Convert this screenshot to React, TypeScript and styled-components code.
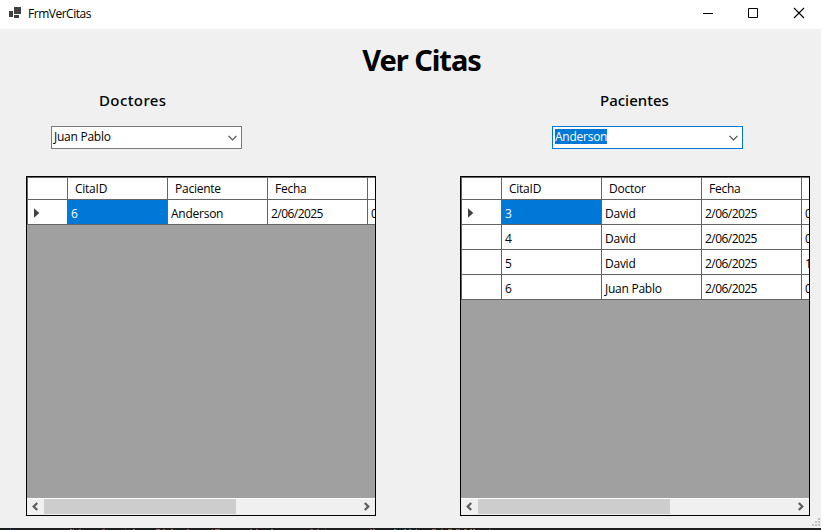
import React from "react";
import styled, { createGlobalStyle, css } from "styled-components";

const GlobalStyle = createGlobalStyle`
  * { box-sizing: border-box; }
  html, body { margin: 0; padding: 0; overflow: hidden; }
  body { font-family: "Open Sans", "Noto Sans", sans-serif; font-size: 12px; color: #000; }
`;

const Window = styled.div`
  width: 821px;
  height: 530px;
  display: flex;
  flex-direction: column;
  background: #f0f0f0;
  overflow: hidden;
`;

const TitleBar = styled.header`
  height: 29px;
  flex: none;
  display: flex;
  align-items: center;
  background: #fff;
`;

const AppIcon = styled.svg`
  width: 14px;
  height: 12px;
  margin: 0 6px 3px 8px;
`;

const Caption = styled.span`
  flex: 1;
  line-height: 16px;
  margin-bottom: 1px;
  letter-spacing: -0.48px;
`;

const CaptionButtons = styled.svg`
  width: 121px;
  height: 29px;
  flex: none;
`;

const Form = styled.main`
  flex: 1;
  display: flex;
  flex-direction: column;
`;

const Heading = styled.h1`
  margin: 9px 0 0 22px;
  height: 43px;
  line-height: 43px;
  font-family: "Noto Sans", "Open Sans", sans-serif;
  font-size: 29px;
  font-weight: 700;
  letter-spacing: -1.05px;
  text-align: center;
`;

const Panels = styled.div`
  display: flex;
  gap: 84px;
  padding: 9px 0 0 26px;
`;

const Panel = styled.section`
  width: 350px;
  display: flex;
  flex-direction: column;
`;

const PanelTitle = styled.h2<{ $indent: number; $tracking: number }>`
  margin: 0 0 0 ${(p) => p.$indent}px;
  height: 21px;
  line-height: 20px;
  font-family: "Noto Sans", "Open Sans", sans-serif;
  font-size: 15px;
  font-weight: 500;
  letter-spacing: ${(p) => p.$tracking}px;
  white-space: nowrap;
`;

const Combo = styled.div<{ $indent: number; $focused?: boolean }>`
  width: 191px;
  height: 23px;
  margin: 15px 0 27px ${(p) => p.$indent}px;
  padding: 0 4px 0 2px;
  display: flex;
  align-items: center;
  justify-content: space-between;
  background: #fff;
  border: 1px solid ${(p) => (p.$focused ? "#0078d7" : "#7a7a7a")};
`;

const ComboText = styled.span<{ $selected?: boolean }>`
  height: 15px;
  line-height: 15px;
  margin-bottom: 2px;
  letter-spacing: -0.25px;
  ${(p) => p.$selected && css`background: #0078d7; color: #fff;`}
`;

const Chevron = styled.svg`
  width: 9px;
  height: 6px;
  margin-top: 1px;
`;

const GridFrame = styled.div`
  width: 350px;
  height: 340px;
  border: 1px solid #000;
  background: #a0a0a0;
  display: flex;
  flex-direction: column;
  overflow: hidden;
`;

const Rows = styled.div`
  flex: 1;
  min-height: 0;
  overflow: hidden;
`;

const Row = styled.div<{ $header?: boolean }>`
  width: 441px;
  display: grid;
  grid-template-columns: 41px repeat(4, 100px);
  height: ${(p) => (p.$header ? 23 : 25)}px;
  ${(p) => p.$header && css`border-top: 1px solid #646464;`}
`;

const Cell = styled.div<{ $header?: boolean; $selected?: boolean; $numeric?: boolean }>`
  padding-left: ${(p) => (p.$header ? 7 : 3)}px;
  line-height: ${(p) => (p.$header ? 22 : 27)}px;
  border-right: 1px solid #646464;
  border-bottom: 1px solid #646464;
  background: ${(p) => (p.$selected ? "#0078d7" : "#fff")};
  color: ${(p) => (p.$selected ? "#fff" : "#000")};
  letter-spacing: ${(p) => (p.$numeric ? -0.55 : -0.25)}px;
  white-space: nowrap;
  overflow: hidden;
`;

const RowHeader = styled.div`
  display: flex;
  align-items: center;
  padding: 2px 0 0 6px;
  background: #fff;
  border-left: 1px solid #646464;
  border-right: 1px solid #646464;
  border-bottom: 1px solid #646464;
`;

const ScrollBar = styled.div`
  height: 17px;
  flex: none;
  display: flex;
  justify-content: space-between;
  background: #f0f0f0;
  border-top: 1px solid #fff;
`;

const ScrollArrow = styled.svg`
  width: 17px;
  height: 15px;
`;

const Thumb = styled.div`
  width: 192px;
  height: 15px;
  margin-right: auto;
  background: #cdcdcd;
`;

const Footer = styled.footer`
  margin-top: auto;
  display: flex;
  flex-direction: column;
  align-items: flex-end;
`;

const Grip = styled.svg`
  width: 9px;
  height: 9px;
  margin-bottom: 1px;
`;

const BottomEdge = styled.svg`
  width: 821px;
  height: 2px;
  background: #1c1e1e;
`;

type GridProps = { columns: string[]; rows: string[][] };

function DataGrid({ columns, rows }: GridProps) {
  return (
    <GridFrame>
      <Rows>
        <Row $header>
          <RowHeader />
          {columns.map((c) => <Cell $header key={c}>{c}</Cell>)}
        </Row>
        {rows.map((r, i) => (
          <Row key={r[0]}>
            <RowHeader>
              {i === 0 && (
                <svg width="6" height="10" viewBox="0 0 6 10">
                  <path d="M0 0.3 5.3 5 0 9.7Z" fill="#404040" />
                </svg>
              )}
            </RowHeader>
            {r.map((v, j) => (
              <Cell key={j} $numeric={j >= 2} $selected={i === 0 && j === 0}>{v}</Cell>
            ))}
          </Row>
        ))}
      </Rows>
      <ScrollBar>
        <ScrollArrow viewBox="0 0 17 15"><path d="M10.2 4 6.7 7.5l3.5 3.5" fill="none" stroke="#606060" strokeWidth="2.3" /></ScrollArrow>
        <Thumb />
        <ScrollArrow viewBox="0 0 17 15"><path d="M6.8 4 10.3 7.5 6.8 11" fill="none" stroke="#606060" strokeWidth="2.3" /></ScrollArrow>
      </ScrollBar>
    </GridFrame>
  );
}

type PanelProps = GridProps & {
  title: string;
  titleIndent: number;
  titleTracking?: number;
  comboIndent: number;
  value: string;
  focused?: boolean;
};

function CitasPanel({ title, titleIndent, titleTracking = 0, comboIndent, value, focused, columns, rows }: PanelProps) {
  return (
    <Panel>
      <PanelTitle $indent={titleIndent} $tracking={titleTracking}>{title}</PanelTitle>
      <Combo $indent={comboIndent} $focused={focused}>
        <ComboText $selected={focused}>{value}</ComboText>
        <Chevron viewBox="0 0 9 6"><path d="M.5 .8 4.5 4.8l4-4" fill="none" stroke="#505050" strokeWidth="1.2" /></Chevron>
      </Combo>
      <DataGrid columns={columns} rows={rows} />
    </Panel>
  );
}

const flecks = [
  [10, 1, "#3b6ea5"], [70, 2, "#a07565"], [73, 1, "#a07565"], [79, 2, "#98705f"], [102, 3, "#86685b"], [125, 1, "#86685b"],
  [133, 2, "#a07565"], [156, 4, "#a07565"], [163, 2, "#98705f"], [171, 2, "#a07565"], [187, 2, "#98705f"], [212, 1, "#a07565"],
  [215, 5, "#98705f"], [250, 2, "#86685b"], [256, 2, "#86685b"], [271, 2, "#a07565"], [310, 3, "#86685b"], [317, 2, "#98705f"],
  [325, 1, "#86685b"], [370, 2, "#98705f"], [373, 2, "#98705f"], [394, 2, "#4c8ac0"], [404, 2, "#4c8ac0"], [409, 2, "#5b8190"],
  [416, 1, "#4c8ac0"], [432, 4, "#98705f"], [441, 2, "#86685b"], [448, 4, "#98705f"], [456, 4, "#86685b"], [464, 3, "#86685b"],
  [470, 2, "#a07565"], [473, 2, "#a07565"], [489, 2, "#505050"],
] as const;

export default function App() {
  return (
    <>
      <GlobalStyle />
      <Window>
        <TitleBar>
          <AppIcon viewBox="0 0 14 12">
            <path d="M1 4h4v6H1zM6 0h7v7H6zM6 8h5v3H6z" fill="#424242" />
          </AppIcon>
          <Caption>FrmVerCitas</Caption>
          <CaptionButtons viewBox="0 0 121 29" fill="none" stroke="#000">
            <path d="M3 13.5h10M48.5 8.5h9v9h-9z" />
            <path d="M94 8l10 10M104 8 94 18" strokeWidth="1.1" />
          </CaptionButtons>
        </TitleBar>
        <Form>
          <Heading>Ver Citas</Heading>
          <Panels>
            <CitasPanel
              title="Doctores" titleIndent={73} titleTracking={0.4} comboIndent={25} value="Juan Pablo"
              columns={["CitaID", "Paciente", "Fecha", "Hora"]}
              rows={[["6", "Anderson", "2/06/2025", "09:00"]]}
            />
            <CitasPanel
              title="Pacientes" titleIndent={140} comboIndent={92} value="Anderson" focused
              columns={["CitaID", "Doctor", "Fecha", "Hora"]}
              rows={[
                ["3", "David", "2/06/2025", "09:00"],
                ["4", "David", "2/06/2025", "08:00"],
                ["5", "David", "2/06/2025", "10:00"],
                ["6", "Juan Pablo", "2/06/2025", "09:00"],
              ]}
            />
          </Panels>
          <Footer>
            <Grip viewBox="0 0 9 9">
              <path d="M6 0h2v2H6zM3 3h2v2H3zM6 3h2v2H6zM0 6h2v2H0zM3 6h2v2H3zM6 6h2v2H6z" fill="#bfbfbf" />
            </Grip>
            <BottomEdge viewBox="0 0 821 2">
              {flecks.map(([x, w, c]) => <rect key={x} x={x} y="1" width={w} height="1" fill={c} />)}
            </BottomEdge>
          </Footer>
        </Form>
      </Window>
    </>
  );
}
